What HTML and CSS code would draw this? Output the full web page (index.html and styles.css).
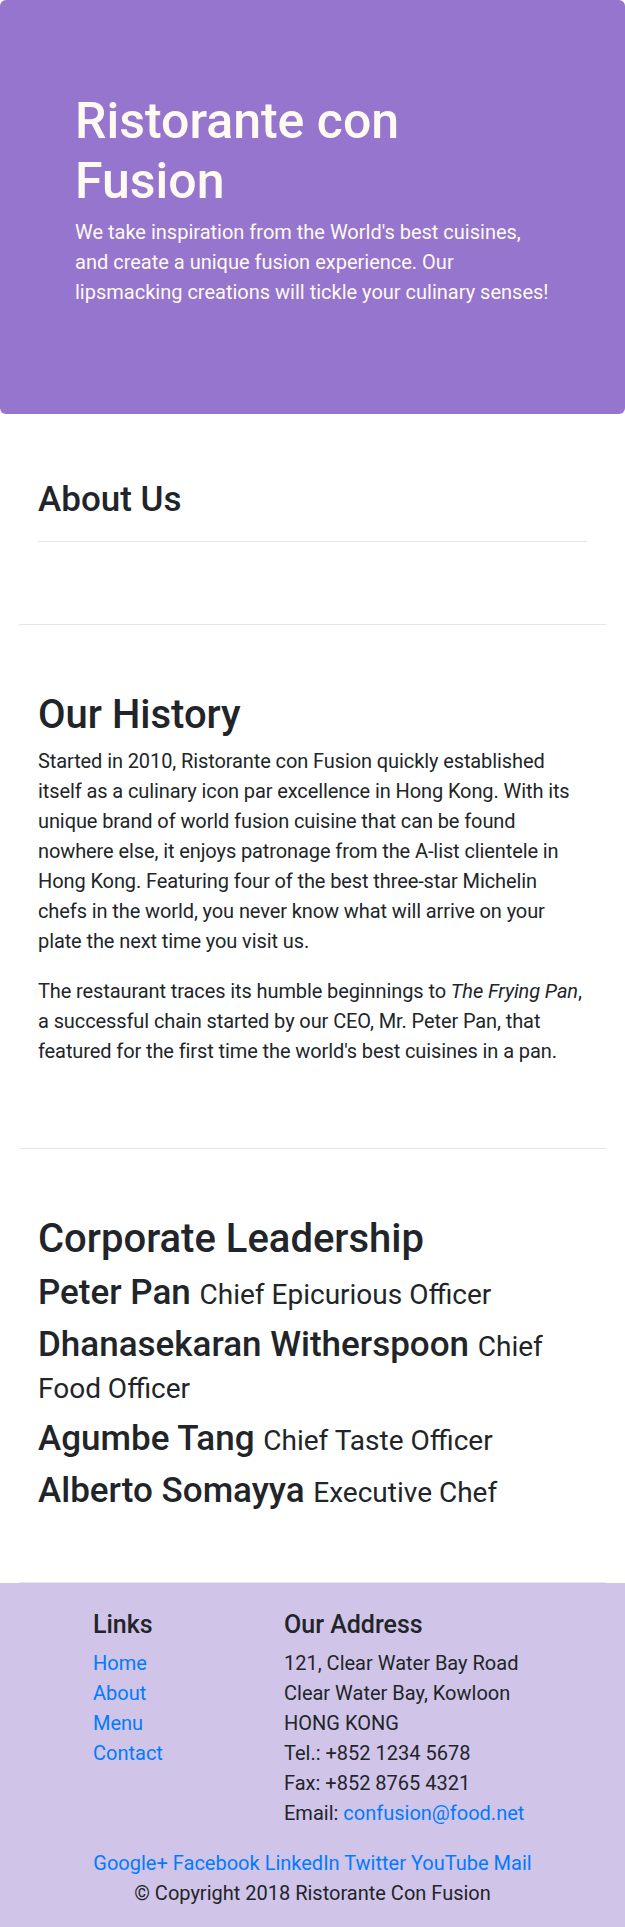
FILE: index.html
```html
<!DOCTYPE html>
<html lang="en">
<head>
<meta charset="utf-8">
<title>Ristorante con Fusion</title>
<link rel="stylesheet" href="styles.css">
</head>
<body>
<header class="jumbotron">
  <div class="jumbo-inner">
    <h1>Ristorante con Fusion</h1>
    <p>We take inspiration from the World's best cuisines, and create a unique fusion experience. Our lipsmacking creations will tickle your culinary senses!</p>
  </div>
</header>

<main class="container">
  <section class="row-content">
    <h3>About Us</h3>
    <hr>
  </section>

  <section class="row-content">
    <h2>Our History</h2>
    <p class="history">Started in 2010, Ristorante con Fusion quickly established<br>itself as a culinary icon par excellence in Hong Kong. With its<br>unique brand of world fusion cuisine that can be found<br>nowhere else, it enjoys patronage from the A-list clientele in<br>Hong Kong. Featuring four of the best three-star Michelin<br>chefs in the world, you never know what will arrive on your<br>plate the next time you visit us.</p>
    <p class="history">The restaurant traces its humble beginnings to <em>The Frying Pan</em>,<br>a successful chain started by our CEO, Mr. Peter Pan, that<br>featured for the first time the world's best cuisines in a pan.</p>
  </section>

  <section class="row-content">
    <h2>Corporate Leadership</h2>
    <h3>Peter Pan <small>Chief Epicurious Officer</small></h3>
    <h3>Dhanasekaran Witherspoon <small>Chief Food Officer</small></h3>
    <h3>Agumbe Tang <small>Chief Taste Officer</small></h3>
    <h3>Alberto Somayya <small>Executive Chef</small></h3>
  </section>
</main>

<footer class="footer">
  <div class="footer-row">
    <div class="links-col">
      <h5>Links</h5>
      <ul class="list-unstyled">
        <li><a href="#">Home</a></li>
        <li><a href="#">About</a></li>
        <li><a href="#">Menu</a></li>
        <li><a href="#">Contact</a></li>
      </ul>
    </div>
    <div class="address-col">
      <h5>Our Address</h5>
      <address>
        121, Clear Water Bay Road<br>
        Clear Water Bay, Kowloon<br>
        HONG KONG<br>
        Tel.: +852 1234 5678<br>
        Fax: +852 8765 4321<br>
        Email: <a href="#">confusion@food.net</a>
      </address>
    </div>
  </div>
  <div class="social">
    <a href="#">Google+</a>
    <a href="#">Facebook</a>
    <a href="#">LinkedIn</a>
    <a href="#">Twitter</a>
    <a href="#">YouTube</a>
    <a href="#">Mail</a>
  </div>
  <p class="copyright">© Copyright 2018 Ristorante Con Fusion</p>
</footer>
</body>
</html>
```

FILE: styles.css
```css
* {
  box-sizing: border-box;
}

html, body {
  margin: 0;
  padding: 0;
}

body {
  font-family: Roboto, "Noto Sans", "Liberation Sans", sans-serif;
  font-size: 20px;
  line-height: 30px;
  color: #212529;
  background: #ffffff;
}

h1, h2, h3, h5 {
  font-weight: 500;
}

h1 {
  font-size: 50px;
  line-height: 60px;
  margin: 0 0 6px 0;
  padding-top: 4px;
}

h2 {
  font-size: 40px;
  line-height: 48px;
  margin: 0 0 7px 0;
  padding-top: 3px;
}

h3 {
  font-size: 35px;
  line-height: 42px;
  margin: 0 0 8px 0;
  padding-top: 2px;
}

h3 small {
  font-size: 80%;
  font-weight: 400;
  line-height: 1;
}

h5 {
  font-size: 25px;
  line-height: 30px;
  margin: 0 0 8px 0;
  padding-top: 2px;
}

p {
  margin: 0 0 20px 0;
}

.history {
  letter-spacing: -0.1px;
}

a {
  color: #007bff;
  text-decoration: none;
}

hr {
  border: 0;
  border-top: 1px solid rgba(0, 0, 0, 0.1);
  margin: 20px 0;
  height: 0;
}

/* Jumbotron */
.jumbotron {
  background: #9575cd;
  color: #fffaf0;
  border-radius: 6px;
  padding: 87px 75px;
}

/* Main content */
.container {
  padding: 0 19px;
}

.row-content {
  padding: 62.5px 19px;
  border-bottom: 1px solid #e6e6e6;
}

/* Footer */
.footer {
  background: #d1c4e9;
  padding: 25px 0 25px 0;
}

.footer-row {
  display: flex;
  padding-left: 93px;
}

.links-col {
  width: 191px;
  flex: none;
}

.address-col {
  flex: 1;
}

.list-unstyled {
  list-style: none;
  margin: 0 0 20px 0;
  padding: 0;
}

address {
  font-style: normal;
  margin: 0 0 20px 0;
}

.social {
  text-align: center;
}

.copyright {
  text-align: center;
  margin: 0;
}
```
